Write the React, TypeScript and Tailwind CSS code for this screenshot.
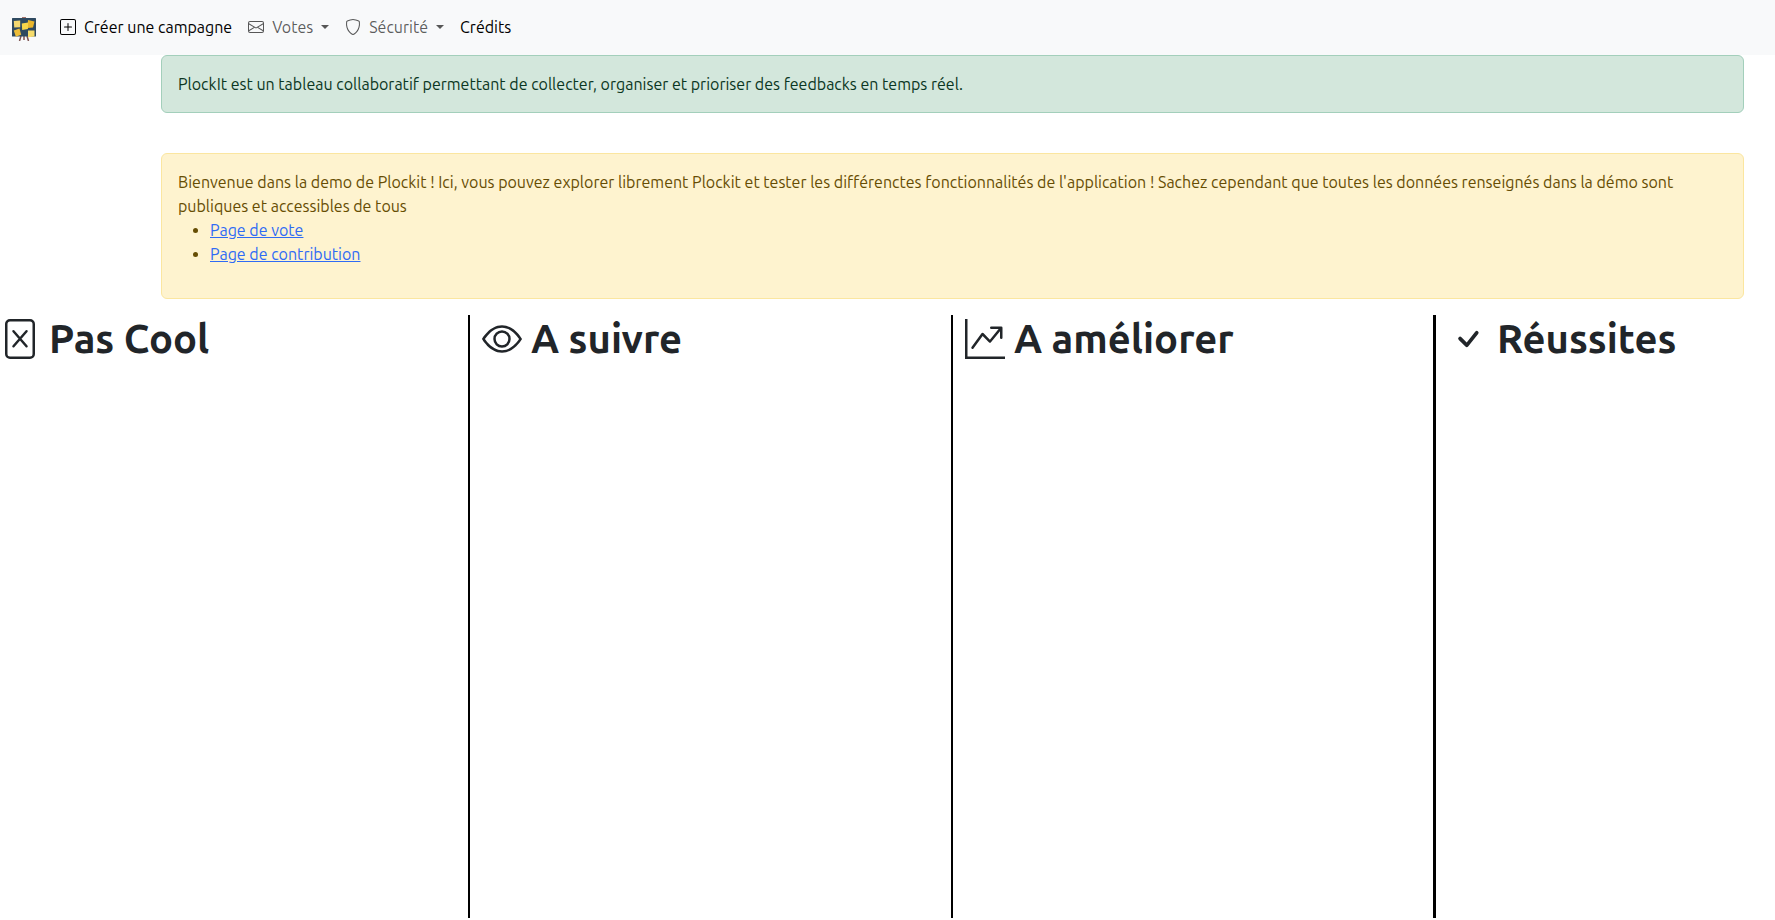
import React from 'react';
import {
	BsCheck,
	BsEnvelope,
	BsEye,
	BsGraphUpArrow,
	BsPlusSquare,
	BsShield,
} from 'react-icons/bs';

const Logo: React.FC = () => (
	<svg viewBox="0 0 24 24" className="size-6" aria-hidden="true">
		<path
			d="M9 19 7.500 24M15 19l1.500 5M12 19v4"
			stroke="#7d5350"
			strokeWidth="1.500"
		/>
		<rect x="10" y="0" width="4" height="2" fill="#a8736a" />
		<rect x="0" y="1" width="24" height="18.500" rx=".5" fill="#2f4a60" />
		<path d="M1.800 4l6.400-.4v6.600l-6 .2z" fill="#f3d870" />
		<path d="M16 3l6.500 1.500-1.500 6-5.500.5z" fill="#e9b62c" />
		<path d="M9.800 6.400l6.400-.8-.3 6.400-5.700 1z" fill="#f8d64a" />
		<path d="M1.800 13.500l5.700-2 1.700 6.300-5.400 2z" fill="#edbd38" />
		<path d="M16 13.600h6.500v6l-6.500.6z" fill="#f6dc6c" />
	</svg>
);

const FileCross: React.FC<{ className?: string }> = ({ className }) => (
	<svg
		viewBox="0 0 16 16"
		fill="none"
		stroke="currentColor"
		strokeLinecap="round"
		className={className}
		aria-hidden="true"
	>
		<rect x="2.500" y=".5" width="11" height="15" rx="1.500" />
		<path d="m5.400 4.900 5.200 6m0-6-5.200 6" />
	</svg>
);

const Caret: React.FC = () => (
	<span className="ml-2 border-x-4 border-t-4 border-x-transparent border-t-current" />
);

const columns = [
	{ title: 'Pas Cool', Icon: FileCross, style: 'border-r-2' },
	{ title: 'A suivre', Icon: BsEye, style: 'border-r-2 pl-3' },
	{ title: 'A améliorer', Icon: BsGraphUpArrow, style: 'border-r-3 pl-3' },
	{ title: 'Réussites', Icon: BsCheck, style: 'pl-3' },
];

const Navbar: React.FC = () => (
	<nav className="flex h-[55px] items-center bg-[#f8f9fa] px-3 pb-px text-black">
		<a href="#" aria-label="PlockIt" className="mt-1 mr-6">
			<Logo />
		</a>
		<div className="flex items-center gap-4">
			<a href="#" className="flex items-center gap-2">
				<BsPlusSquare />
				Créer une campagne
			</a>
			<button type="button" className="flex items-center text-black/65">
				<BsEnvelope className="mr-2" />
				Votes
				<Caret />
			</button>
			<button type="button" className="flex items-center text-black/65">
				<BsShield className="mr-2" />
				Sécurité
				<Caret />
			</button>
			<a href="#">Crédits</a>
		</div>
	</nav>
);

const App: React.FC = () => {
	return (
		<div className="flex min-h-screen flex-col bg-white pb-0.5 font-[Ubuntu,'Noto_Sans',sans-serif] text-base leading-6 text-[#212529]">
			<Navbar />
			<main className="flex flex-1 flex-col">
				<div className="mr-[31px] mb-4 ml-[161px] flex flex-col gap-10">
					<div className="rounded-md border border-[#a3cfbb] bg-[#d3e7dc] p-4 text-[#0a3622]">
						PlockIt est un tableau collaboratif permettant de collecter,
						organiser et prioriser des feedbacks en temps réel.
					</div>
					<div className="rounded-md border border-[#fbe6a0] bg-[#fef3cf] p-4 text-[#664d03]">
						Bienvenue dans la demo de Plockit ! Ici, vous pouvez explorer
						librement Plockit et tester les différenctes fonctionnalités de
						l'application ! Sachez cependant que toutes les données
						renseignés dans la démo sont publiques et accessibles de tous
						<ul className="mb-4 list-disc pl-8">
							<li>
								<a href="#" className="text-[#2f6bf5] underline">
									Page de vote
								</a>
							</li>
							<li>
								<a href="#" className="text-[#2f6bf5] underline">
									Page de contribution
								</a>
							</li>
						</ul>
					</div>
				</div>
				<div className="grid flex-1 grid-cols-[470fr_483fr_483fr_339fr]">
					{columns.map(({ title, Icon, style }) => (
						<section key={title} className={`border-black ${style}`}>
							<h1 className="flex items-center gap-[9px] text-[40px] leading-12 font-semibold">
								<Icon className="size-10" />
								{title}
							</h1>
						</section>
					))}
				</div>
			</main>
		</div>
	);
};

export default App;
